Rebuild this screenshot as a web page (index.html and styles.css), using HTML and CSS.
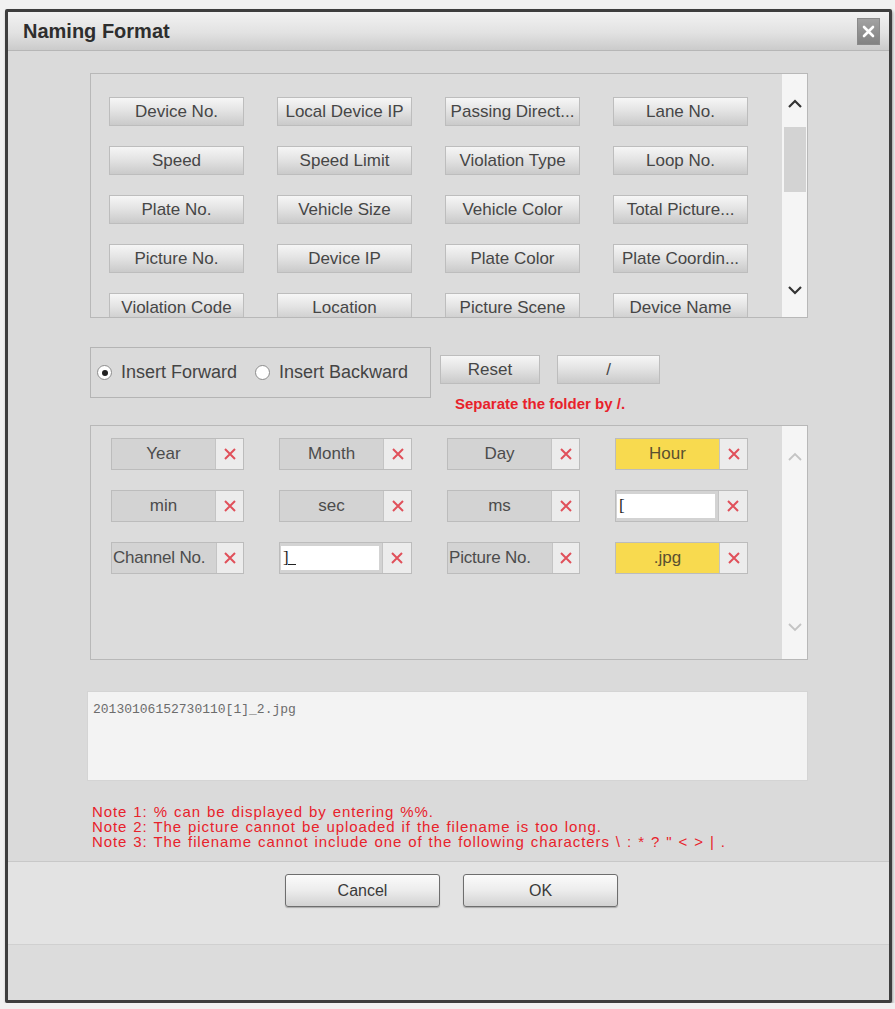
FILE: index.html
```html
<!DOCTYPE html>
<html>
<head>
<meta charset="utf-8">
<title>Naming Format</title>
<link rel="stylesheet" href="styles.css">
</head>
<body>
<div class="dialog">
  <div class="titlebar">
    <span class="title">Naming Format</span>
    <span class="close"><svg width="13" height="13" viewBox="0 0 13 13"><path d="M2 2L11 11M11 2L2 11" stroke="#fff" stroke-width="2.6" stroke-linecap="round"/></svg></span>
  </div>
  <div class="content">
    <div class="panel fields">
      <div class="grid-btns">
        <button class="fbtn">Device No.</button>
        <button class="fbtn">Local Device IP</button>
        <button class="fbtn">Passing Direct...</button>
        <button class="fbtn">Lane No.</button>
        <button class="fbtn">Speed</button>
        <button class="fbtn">Speed Limit</button>
        <button class="fbtn">Violation Type</button>
        <button class="fbtn">Loop No.</button>
        <button class="fbtn">Plate No.</button>
        <button class="fbtn">Vehicle Size</button>
        <button class="fbtn">Vehicle Color</button>
        <button class="fbtn">Total Picture...</button>
        <button class="fbtn">Picture No.</button>
        <button class="fbtn">Device IP</button>
        <button class="fbtn">Plate Color</button>
        <button class="fbtn">Plate Coordin...</button>
        <button class="fbtn">Violation Code</button>
        <button class="fbtn">Location</button>
        <button class="fbtn">Picture Scene</button>
        <button class="fbtn">Device Name</button>
      </div>
      <div class="scrollbar">
        <svg class="arrow" width="16" height="10" viewBox="0 0 16 10"><path d="M2 8L8 2L14 8" fill="none" stroke="#333" stroke-width="2.2"/></svg>
        <div class="thumb"></div>
        <div class="spacer"></div>
        <svg class="arrow" width="16" height="10" viewBox="0 0 16 10"><path d="M2 2L8 8L14 2" fill="none" stroke="#333" stroke-width="2.2"/></svg>
      </div>
    </div>

    <div class="options">
      <div class="insert-box">
        <label class="radio"><span class="dot checked"></span>Insert Forward</label>
        <label class="radio"><span class="dot"></span>Insert Backward</label>
      </div>
      <div class="actions">
        <div class="action-btns">
          <button class="fbtn reset">Reset</button>
          <button class="fbtn slash">/</button>
        </div>
        <div class="hint">Separate the folder by /.</div>
      </div>
    </div>

    <div class="panel selected">
      <div class="grid-items">
        <div class="item"><span class="lbl">Year</span><span class="x"><svg width="12" height="12" viewBox="0 0 12 12"><path d="M1 1L11 11M11 1L1 11" stroke="#e0505a" stroke-width="2"/></svg></span></div>
        <div class="item"><span class="lbl">Month</span><span class="x"><svg width="12" height="12" viewBox="0 0 12 12"><path d="M1 1L11 11M11 1L1 11" stroke="#e0505a" stroke-width="2"/></svg></span></div>
        <div class="item"><span class="lbl">Day</span><span class="x"><svg width="12" height="12" viewBox="0 0 12 12"><path d="M1 1L11 11M11 1L1 11" stroke="#e0505a" stroke-width="2"/></svg></span></div>
        <div class="item"><span class="lbl yellow">Hour</span><span class="x"><svg width="12" height="12" viewBox="0 0 12 12"><path d="M1 1L11 11M11 1L1 11" stroke="#e0505a" stroke-width="2"/></svg></span></div>
        <div class="item"><span class="lbl">min</span><span class="x"><svg width="12" height="12" viewBox="0 0 12 12"><path d="M1 1L11 11M11 1L1 11" stroke="#e0505a" stroke-width="2"/></svg></span></div>
        <div class="item"><span class="lbl">sec</span><span class="x"><svg width="12" height="12" viewBox="0 0 12 12"><path d="M1 1L11 11M11 1L1 11" stroke="#e0505a" stroke-width="2"/></svg></span></div>
        <div class="item"><span class="lbl">ms</span><span class="x"><svg width="12" height="12" viewBox="0 0 12 12"><path d="M1 1L11 11M11 1L1 11" stroke="#e0505a" stroke-width="2"/></svg></span></div>
        <div class="item"><span class="lbl field"><span class="input">[</span></span><span class="x"><svg width="12" height="12" viewBox="0 0 12 12"><path d="M1 1L11 11M11 1L1 11" stroke="#e0505a" stroke-width="2"/></svg></span></div>
        <div class="item"><span class="lbl tight">Channel No.</span><span class="x"><svg width="12" height="12" viewBox="0 0 12 12"><path d="M1 1L11 11M11 1L1 11" stroke="#e0505a" stroke-width="2"/></svg></span></div>
        <div class="item"><span class="lbl field"><span class="input">]<span class="caret"></span></span></span><span class="x"><svg width="12" height="12" viewBox="0 0 12 12"><path d="M1 1L11 11M11 1L1 11" stroke="#e0505a" stroke-width="2"/></svg></span></div>
        <div class="item"><span class="lbl tight">Picture No.</span><span class="x"><svg width="12" height="12" viewBox="0 0 12 12"><path d="M1 1L11 11M11 1L1 11" stroke="#e0505a" stroke-width="2"/></svg></span></div>
        <div class="item"><span class="lbl yellow">.jpg</span><span class="x"><svg width="12" height="12" viewBox="0 0 12 12"><path d="M1 1L11 11M11 1L1 11" stroke="#e0505a" stroke-width="2"/></svg></span></div>
      </div>
      <div class="scrollbar light">
        <svg class="arrow" width="16" height="10" viewBox="0 0 16 10"><path d="M2 8L8 2L14 8" fill="none" stroke="#c4c4c4" stroke-width="1.8"/></svg>
        <div class="spacer"></div>
        <svg class="arrow" width="16" height="10" viewBox="0 0 16 10"><path d="M2 2L8 8L14 2" fill="none" stroke="#c4c4c4" stroke-width="1.8"/></svg>
      </div>
    </div>

    <div class="preview">20130106152730110[1]_2.jpg</div>

    <div class="notes">
      <div>Note 1: % can be displayed by entering %%.</div>
      <div>Note 2: The picture cannot be uploaded if the filename is too long.</div>
      <div>Note 3: The filename cannot include one of the following characters \ : * ? " &lt; &gt; | .</div>
    </div>
  </div>
  <div class="footer">
    <button class="dbtn">Cancel</button>
    <button class="dbtn">OK</button>
  </div>
  <div class="bottom"></div>
</div>
</body>
</html>
```

FILE: styles.css
```css
html, body {
  margin: 0;
  padding: 0;
  background: #f1f1f1;
}
body {
  font-family: "Liberation Sans", Arial, sans-serif;
  color: #444;
}
.dialog {
  margin: 9px 0 0 5px;
  width: 887px;
  height: 994px;
  box-sizing: border-box;
  border: 3px solid #3e3e3e;
  border-radius: 2px;
  background: #dadada;
  display: flex;
  flex-direction: column;
  box-shadow: 1px 2px 3px rgba(0,0,0,0.35);
}
.titlebar {
  height: 38px;
  flex: none;
  display: flex;
  align-items: center;
  justify-content: space-between;
  padding: 0 9px 0 15px;
  background: linear-gradient(#f2f2f2, #e2e2e2 55%, #cbcbcb);
  border-bottom: 1px solid #b6b6b6;
}
.title {
  font-weight: bold;
  font-size: 20px;
  color: #2e2e2e;
}
.close {
  width: 23px;
  height: 27px;
  display: flex;
  align-items: center;
  justify-content: center;
  background: linear-gradient(#a2a2a2, #828282);
  border: 1px solid #8a8a8a;
  box-sizing: border-box;
}
.content {
  padding-left: 82px;
  display: flex;
  flex-direction: column;
}
.panel {
  width: 718px;
  box-sizing: border-box;
  border: 1px solid #b8b8b8;
  display: flex;
  background: #dcdcdc;
}
.fields {
  margin-top: 22px;
  height: 245px;
  overflow: hidden;
}
.grid-btns {
  flex: 1;
  display: grid;
  grid-template-columns: repeat(4, 135px);
  grid-auto-rows: 29px;
  column-gap: 33px;
  row-gap: 20px;
  padding: 23px 0 0 18px;
  align-content: start;
}
.fbtn {
  font-family: "Liberation Sans", Arial, sans-serif;
  font-size: 17px;
  color: #464646;
  padding: 0 1px;
  margin: 0;
  height: 29px;
  border: 1px solid #bdbdbd;
  border-radius: 0;
  background: linear-gradient(#f6f6f6, #e4e4e4 45%, #cacaca);
  white-space: nowrap;
  overflow: hidden;
}
.scrollbar {
  width: 25px;
  flex: none;
  background: #f5f5f5;
  display: flex;
  flex-direction: column;
  align-items: center;
  padding: 25px 0 22px;
  box-sizing: border-box;
}
.scrollbar .arrow {
  flex: none;
}
.thumb {
  width: 22px;
  height: 65px;
  margin-top: 18px;
  background: #d3d3d3;
}
.spacer {
  flex: 1;
}
.scrollbar.light {
  padding: 26px 0 27px;
}

.options {
  display: flex;
  height: 51px;
  margin-top: 29px;
}
.insert-box {
  width: 341px;
  box-sizing: border-box;
  border: 1px solid #b4b4b4;
  display: flex;
  align-items: center;
  padding-left: 6px;
  gap: 18px;
  font-size: 18px;
  color: #444;
}
.radio {
  display: flex;
  align-items: center;
  white-space: nowrap;
}
.dot {
  width: 15px;
  height: 15px;
  border-radius: 50%;
  border: 1px solid #8c8c8c;
  background: #fff;
  margin-right: 9px;
  box-sizing: border-box;
  position: relative;
}
.dot.checked::after {
  content: "";
  position: absolute;
  left: 3.5px;
  top: 3.5px;
  width: 6px;
  height: 6px;
  border-radius: 50%;
  background: #222;
}
.actions {
  margin-left: 9px;
  padding-top: 8px;
}
.action-btns {
  display: flex;
  gap: 17px;
}
.reset { width: 100px; }
.slash { width: 103px; }
.hint {
  margin: 11px 0 0 15px;
  color: #e8222b;
  font-weight: bold;
  font-size: 15px;
  white-space: nowrap;
}

.selected {
  margin-top: 27px;
  height: 235px;
}
.grid-items {
  flex: 1;
  display: grid;
  grid-template-columns: repeat(4, 133px);
  grid-auto-rows: 32px;
  column-gap: 35px;
  row-gap: 20px;
  padding: 12px 0 0 20px;
  align-content: start;
}
.item {
  display: flex;
  border: 1px solid #bcbcbc;
  box-sizing: border-box;
  height: 32px;
}
.lbl {
  width: 103px;
  flex: none;
  display: flex;
  align-items: center;
  justify-content: center;
  background: #d3d3d3;
  border-right: 1px solid #c4c4c4;
  font-size: 17px;
  color: #4c4c4c;
  white-space: nowrap;
}
.lbl.tight {
  justify-content: flex-start;
  letter-spacing: -0.2px;
  padding-left: 1px;
}
.lbl.yellow {
  background: #f8da4f;
  color: #5a5030;
}
.lbl.field {
  justify-content: flex-start;
  padding: 3px 3px 3px 1px;
  box-sizing: border-box;
}
.input {
  flex: 1;
  height: 100%;
  background: #fff;
  display: flex;
  align-items: center;
  padding-left: 2px;
  color: #222;
  font-size: 17px;
  font-family: "Liberation Serif", serif;
}
.caret {
  display: inline-block;
  width: 8px;
  height: 1px;
  background: #222;
  margin-top: 13px;
  margin-left: -1px;
}
.x {
  flex: 1;
  display: flex;
  align-items: center;
  justify-content: center;
  background: #ececec;
}

.preview {
  margin: 31px 0 0 -3px;
  width: 721px;
  height: 90px;
  box-sizing: border-box;
  background: #f3f3f3;
  border: 1px solid #d4d4d4;
  font-family: "Liberation Mono", "Courier New", monospace;
  font-size: 13px;
  color: #6c6c6c;
  padding: 10px 0 0 5px;
}
.notes {
  margin: 23px 0 0 2px;
  color: #e8222b;
  font-size: 15px;
  line-height: 15px;
  letter-spacing: 0.9px;
  word-spacing: 1px;
  white-space: nowrap;
}

.footer {
  flex: none;
  margin-top: 12px;
  border-top: 1px solid #c8c8c8;
  background: #e3e3e3;
  height: 84px;
  box-sizing: border-box;
  padding: 12px 0 0 6px;
  display: flex;
  justify-content: center;
  align-items: flex-start;
  gap: 23px;
  border-bottom: 1px solid #d0d0d0;
}
.dbtn {
  width: 155px;
  height: 33px;
  font-family: "Liberation Sans", Arial, sans-serif;
  font-size: 16px;
  color: #3a3a3a;
  border: 1px solid #6e6e6e;
  border-radius: 3px;
  background: linear-gradient(#fbfbfb, #ececec 50%, #d2d2d2);
  box-shadow: 0 1px 1px rgba(0,0,0,0.25);
}
.bottom {
  flex: 1;
  background: #dcdcdc;
}
```
